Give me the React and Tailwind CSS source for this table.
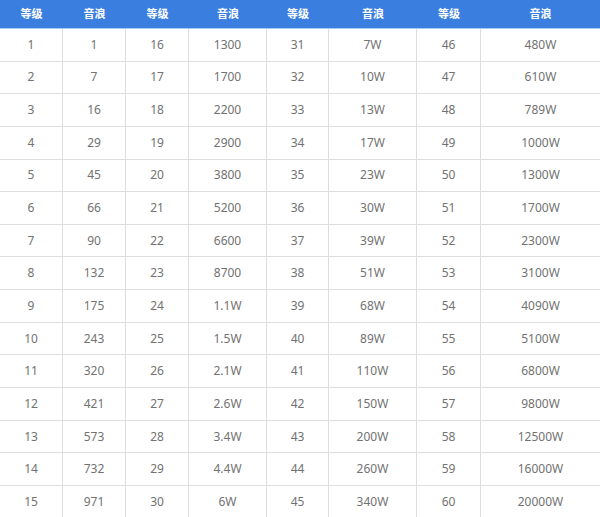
import React from "react";

const headers = ["等级", "音浪", "等级", "音浪", "等级", "音浪", "等级", "音浪"];

const col2 = ["1", "7", "16", "29", "45", "66", "90", "132", "175", "243", "320", "421", "573", "732", "971"];
const col4 = ["1300", "1700", "2200", "2900", "3800", "5200", "6600", "8700", "1.1W", "1.5W", "2.1W", "2.6W", "3.4W", "4.4W", "6W"];
const col6 = ["7W", "10W", "13W", "17W", "23W", "30W", "39W", "51W", "68W", "89W", "110W", "150W", "200W", "260W", "340W"];
const col8 = ["480W", "610W", "789W", "1000W", "1300W", "1700W", "2300W", "3100W", "4090W", "5100W", "6800W", "9800W", "12500W", "16000W", "20000W"];

const rows = col2.map((_, i) => [
    String(i + 1),
    col2[i],
    String(i + 16),
    col4[i],
    String(i + 31),
    col6[i],
    String(i + 46),
    col8[i],
]);

const cols = "grid grid-cols-[63px_63px_63px_78px_62px_88px_64px_1fr]";

function App() {
    return (
        <div
            className="w-[600px] h-[517px] overflow-hidden bg-white"
            style={{ fontFamily: '"Noto Sans", "Noto Sans CJK SC", sans-serif' }}
        >
            <div className={`${cols} h-[29px] bg-[#3a7ee0] border-b border-[#a9c8f2]`}>
                {headers.map((h, i) => (
                    <div
                        key={i}
                        className="flex items-center justify-center text-[11px] font-bold text-white"
                    >
                        {h}
                    </div>
                ))}
            </div>
            {rows.map((row, r) => (
                <div key={r} className={`${cols} h-[32.65px] border-b border-[#dedede]`}>
                    {row.map((cell, c) => (
                        <div
                            key={c}
                            className={
                                "flex items-center justify-center text-[12px] text-[#727272] " +
                                (c < 7 ? "border-r border-[#dedede]" : "")
                            }
                        >
                            {cell}
                        </div>
                    ))}
                </div>
            ))}
        </div>
    );
}

export default App;
